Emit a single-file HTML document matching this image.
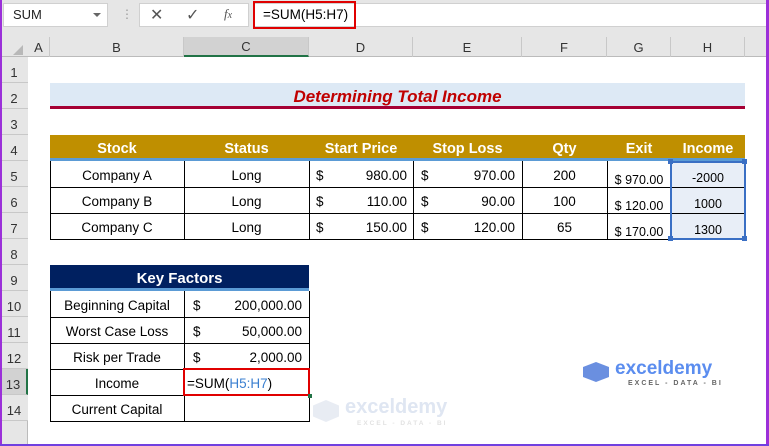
<!DOCTYPE html>
<html><head><meta charset="utf-8"><style>
*{margin:0;padding:0;box-sizing:border-box}
body{width:769px;height:446px;overflow:hidden;background:#fff;font-family:"Liberation Sans",Arial,sans-serif;position:relative}
.a{position:absolute}
.c{position:absolute;display:flex;align-items:center;justify-content:center;font-size:13.5px;color:#000;white-space:nowrap;padding-top:3px}
.ch{position:absolute;top:37px;height:20px;border-right:1px solid #c8c8c8;display:flex;align-items:center;justify-content:center;font-size:13px;color:#333}
.rh{position:absolute;left:0;width:28px;height:26px;border-bottom:1px solid #c8c8c8;display:flex;align-items:center;justify-content:center;font-size:13px;color:#333;background:#e6e6e6;padding-top:5px}
.w{color:#fff;font-weight:bold;font-size:14.5px}
</style></head><body>
<div class="a" style="left:0;top:0;width:769px;height:37px;background:#e6e6e6"></div>
<div class="a" style="left:3px;top:3px;width:105px;height:24px;background:#fff;border:1px solid #d0d0d0"></div>
<div class="a" style="left:13px;top:7px;font-size:13px;color:#222">SUM</div>
<div class="a" style="left:93px;top:13px;width:0;height:0;border-left:4px solid transparent;border-right:4px solid transparent;border-top:4px solid #666"></div>
<div class="a" style="left:121px;top:7px;font-size:12px;color:#999">⋮</div>
<div class="a" style="left:139px;top:3px;width:110px;height:24px;background:#fff;border:1px solid #d0d0d0"></div>
<div class="a" style="left:150px;top:5px;font-size:16px;color:#555">✕</div>
<div class="a" style="left:186px;top:5px;font-size:16px;color:#555">✓</div>
<div class="a" style="left:224px;top:6px;font-size:13px;color:#555;font-style:italic;font-family:'Liberation Serif',serif">f<span style="font-size:10px">x</span></div>
<div class="a" style="left:253px;top:3px;width:516px;height:24px;background:#fff;border:1px solid #d0d0d0"></div>
<div class="a" style="left:253px;top:1px;width:103px;height:28px;border:2px solid #e00000"></div>
<div class="a" style="left:263px;top:7px;font-size:13.5px;color:#000">=SUM(H5:H7)</div>
<div class="a" style="left:0;top:37px;width:769px;height:20px;background:#e6e6e6;border-bottom:1px solid #bbb"></div>
<div class="a" style="left:13px;top:45px;width:0;height:0;border-left:10px solid transparent;border-bottom:10px solid #b8b8b8"></div>
<div class="ch" style="left:28px;width:22px">A</div>
<div class="ch" style="left:50px;width:134px">B</div>
<div class="ch" style="left:184px;width:125px;background:#d2d2d2;border-bottom:2px solid #217346">C</div>
<div class="ch" style="left:309px;width:104px">D</div>
<div class="ch" style="left:413px;width:109px">E</div>
<div class="ch" style="left:522px;width:85px">F</div>
<div class="ch" style="left:607px;width:64px">G</div>
<div class="ch" style="left:671px;width:74px">H</div>
<div class="a" style="left:0;top:57px;width:28px;height:389px;background:#e6e6e6;border-right:1px solid #bbb"></div>
<div class="rh" style="top:57px">1</div><div class="rh" style="top:83px">2</div><div class="rh" style="top:109px">3</div><div class="rh" style="top:135px">4</div><div class="rh" style="top:161px">5</div><div class="rh" style="top:187px">6</div><div class="rh" style="top:213px">7</div><div class="rh" style="top:239px">8</div><div class="rh" style="top:265px">9</div><div class="rh" style="top:291px">10</div><div class="rh" style="top:317px">11</div><div class="rh" style="top:343px">12</div><div class="rh" style="top:369px;background:#d2d2d2;border-right:2px solid #217346">13</div><div class="rh" style="top:395px">14</div>
<div class="a" style="left:50px;top:83px;width:695px;height:26px;background:#dde9f5;border-bottom:3px solid #a50034"></div>
<div class="c" style="left:50px;top:83px;width:695px;height:24px;color:#c00000;font-weight:bold;font-style:italic;font-size:17px">Determining Total Income</div>
<div class="a" style="left:50px;top:135px;width:695px;height:26px;background:#bf8f00;border-bottom:3px solid #5b9bd5"></div>
<div class="c w" style="left:50px;top:135px;width:134px;height:24px">Stock</div>
<div class="c w" style="left:184px;top:135px;width:125px;height:24px">Status</div>
<div class="c w" style="left:309px;top:135px;width:104px;height:24px">Start Price</div>
<div class="c w" style="left:413px;top:135px;width:109px;height:24px">Stop Loss</div>
<div class="c w" style="left:522px;top:135px;width:85px;height:24px">Qty</div>
<div class="c w" style="left:607px;top:135px;width:64px;height:24px">Exit</div>
<div class="c w" style="left:671px;top:135px;width:74px;height:24px">Income</div>
<div class="a" style="left:50px;top:161px;width:696px;height:79px;border:1px solid #000;border-top:none"></div>
<div class="a" style="left:50px;top:187px;width:696px;height:1px;background:#000"></div>
<div class="a" style="left:50px;top:213px;width:696px;height:1px;background:#000"></div>
<div class="a" style="left:184px;top:161px;width:1px;height:79px;background:#000"></div>
<div class="a" style="left:309px;top:161px;width:1px;height:79px;background:#000"></div>
<div class="a" style="left:413px;top:161px;width:1px;height:79px;background:#000"></div>
<div class="a" style="left:522px;top:161px;width:1px;height:79px;background:#000"></div>
<div class="a" style="left:607px;top:161px;width:1px;height:79px;background:#000"></div>
<div class="a" style="left:671px;top:161px;width:1px;height:79px;background:#000"></div>
<div class="a" style="left:672px;top:162px;width:73px;height:77px;background:#e8eef7"></div>
<div class="a" style="left:672px;top:187px;width:73px;height:1px;background:#000"></div>
<div class="a" style="left:672px;top:213px;width:73px;height:1px;background:#000"></div>
<div class="a" style="left:670px;top:161px;width:76px;height:79px;border:2px solid #3a6fc4"></div>
<div class="a" style="left:668px;top:159px;width:5px;height:5px;background:#3a6fc4"></div>
<div class="a" style="left:742px;top:159px;width:5px;height:5px;background:#3a6fc4"></div>
<div class="a" style="left:668px;top:236px;width:5px;height:5px;background:#3a6fc4"></div>
<div class="a" style="left:742px;top:236px;width:5px;height:5px;background:#3a6fc4"></div>
<div class="c" style="left:50px;top:161px;width:134px;height:26px">Company A</div>
<div class="c" style="left:50px;top:187px;width:134px;height:26px">Company B</div>
<div class="c" style="left:50px;top:213px;width:134px;height:26px">Company C</div>
<div class="c" style="left:184px;top:161px;width:125px;height:26px">Long</div>
<div class="c" style="left:184px;top:187px;width:125px;height:26px">Long</div>
<div class="c" style="left:184px;top:213px;width:125px;height:26px">Long</div>
<div class="c" style="left:316px;top:161px;height:26px">$</div><div class="c" style="left:340px;top:161px;width:67px;height:26px;justify-content:flex-end">980.00</div>
<div class="c" style="left:316px;top:187px;height:26px">$</div><div class="c" style="left:340px;top:187px;width:67px;height:26px;justify-content:flex-end">110.00</div>
<div class="c" style="left:316px;top:213px;height:26px">$</div><div class="c" style="left:340px;top:213px;width:67px;height:26px;justify-content:flex-end">150.00</div>
<div class="c" style="left:421px;top:161px;height:26px">$</div><div class="c" style="left:440px;top:161px;width:75px;height:26px;justify-content:flex-end">970.00</div>
<div class="c" style="left:421px;top:187px;height:26px">$</div><div class="c" style="left:440px;top:187px;width:75px;height:26px;justify-content:flex-end">90.00</div>
<div class="c" style="left:421px;top:213px;height:26px">$</div><div class="c" style="left:440px;top:213px;width:75px;height:26px;justify-content:flex-end">120.00</div>
<div class="c" style="left:522px;top:161px;width:85px;height:26px">200</div>
<div class="c" style="left:522px;top:187px;width:85px;height:26px">100</div>
<div class="c" style="left:522px;top:213px;width:85px;height:26px">65</div>
<div class="c" style="left:607px;top:165px;width:64px;height:26px;font-size:12.5px">$ 970.00</div>
<div class="c" style="left:607px;top:191px;width:64px;height:26px;font-size:12.5px">$ 120.00</div>
<div class="c" style="left:607px;top:217px;width:64px;height:26px;font-size:12.5px">$ 170.00</div>
<div class="c" style="left:671px;top:163px;width:74px;height:26px;font-size:12.5px">-2000</div>
<div class="c" style="left:671px;top:189px;width:74px;height:26px;font-size:12.5px">1000</div>
<div class="c" style="left:671px;top:215px;width:74px;height:26px;font-size:12.5px">1300</div>
<div class="a" style="left:50px;top:265px;width:259px;height:26px;background:#002060;border-bottom:3px solid #5b9bd5"></div>
<div class="c w" style="left:50px;top:265px;width:259px;height:24px;font-size:15px">Key Factors</div>
<div class="a" style="left:50px;top:291px;width:260px;height:131px;border:1px solid #000;border-top:none"></div>
<div class="a" style="left:50px;top:317px;width:260px;height:1px;background:#000"></div>
<div class="a" style="left:50px;top:343px;width:260px;height:1px;background:#000"></div>
<div class="a" style="left:50px;top:369px;width:260px;height:1px;background:#000"></div>
<div class="a" style="left:50px;top:395px;width:260px;height:1px;background:#000"></div>
<div class="a" style="left:184px;top:291px;width:1px;height:131px;background:#000"></div>
<div class="c" style="left:50px;top:291px;width:134px;height:26px">Beginning Capital</div>
<div class="c" style="left:50px;top:317px;width:134px;height:26px">Worst Case Loss</div>
<div class="c" style="left:50px;top:343px;width:134px;height:26px">Risk per Trade</div>
<div class="c" style="left:50px;top:369px;width:134px;height:26px">Income</div>
<div class="c" style="left:50px;top:395px;width:134px;height:26px">Current Capital</div>
<div class="c" style="left:193px;top:291px;height:26px">$</div><div class="c" style="left:210px;top:291px;width:92px;height:26px;justify-content:flex-end">200,000.00</div>
<div class="c" style="left:193px;top:317px;height:26px">$</div><div class="c" style="left:210px;top:317px;width:92px;height:26px;justify-content:flex-end">50,000.00</div>
<div class="c" style="left:193px;top:343px;height:26px">$</div><div class="c" style="left:210px;top:343px;width:92px;height:26px;justify-content:flex-end">2,000.00</div>
<div class="a" style="left:183px;top:368px;width:127px;height:28px;border:2px solid #e00000;background:#fff"></div>
<div class="c" style="left:187px;top:369px;height:26px">=SUM(<span style="color:#3a7fd0">H5:H7</span>)</div>
<div class="a" style="left:308px;top:394px;width:4px;height:4px;background:#217346"></div>
<div class="a" style="left:583px;top:362px;width:26px;height:20px;background:#6a8fe0;clip-path:polygon(50% 0,100% 25%,100% 75%,50% 100%,0 75%,0 25%)"></div>
<div class="a" style="left:615px;top:358px;font-size:19px;font-weight:bold;color:#5b8def">exceldemy</div>
<div class="a" style="left:628px;top:380px;font-size:7px;letter-spacing:2px;color:#666;font-weight:bold">EXCEL - DATA - BI</div>
<div class="a" style="left:313px;top:400px;width:26px;height:22px;background:#e8ecf3;clip-path:polygon(50% 0,100% 25%,100% 75%,50% 100%,0 75%,0 25%)"></div>
<div class="a" style="left:345px;top:396px;font-size:20px;font-weight:bold;color:#dfe6f2">exceldemy</div>
<div class="a" style="left:357px;top:420px;font-size:6.5px;letter-spacing:2px;color:#e2e2e2;font-weight:bold">EXCEL - DATA - BI</div>
<div class="a" style="left:0;top:0;width:2px;height:446px;background:#9b30d9"></div>
<div class="a" style="left:766px;top:0;width:3px;height:446px;background:#9b30d9"></div>
<div class="a" style="left:0;top:444px;width:769px;height:2px;background:#7040e0"></div>
</body></html>
